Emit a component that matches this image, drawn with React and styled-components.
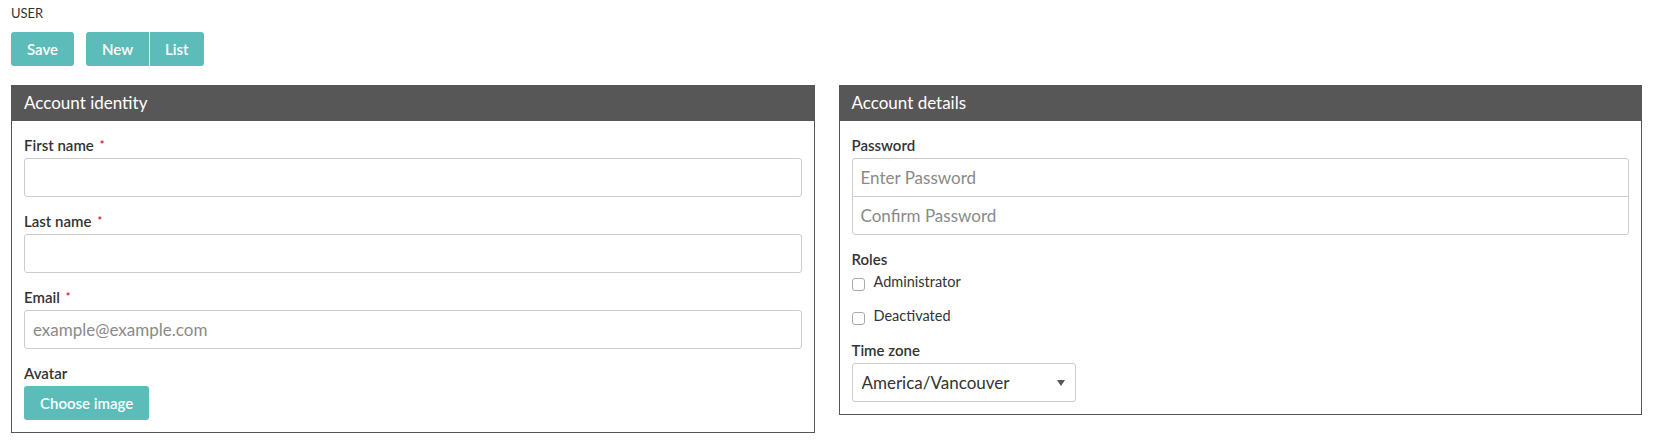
import React from "react";
import styled, { createGlobalStyle } from "styled-components";

const GlobalStyle = createGlobalStyle`
  html, body {
    margin: 0;
    padding: 0;
    background: #ffffff;
  }
  body {
    font-family: Lato, "Liberation Sans", Arial, sans-serif;
    color: #333333;
  }
  * { box-sizing: border-box; }
`;

const Page = styled.div`
  padding: 5px 15px 0 11px;
`;

const Title = styled.div`
  font-size: 13px;
  line-height: 16px;
  color: #333;
  margin-bottom: 11px;
`;

const Toolbar = styled.div`
  display: flex;
  gap: 12px;
  margin-bottom: 19px;
`;

const ButtonGroup = styled.div`
  display: flex;
  gap: 1px;
  & > button { border-radius: 0; }
  & > button:first-child { border-radius: 3px 0 0 3px; }
  & > button:last-child { border-radius: 0 3px 3px 0; padding: 0 15px; }
`;

const Button = styled.button`
  height: 34px;
  padding: 0 16px;
  border: none;
  border-radius: 3px;
  background: #5cbcb9;
  color: #ffffff;
  font-family: Lato, "Liberation Sans", Arial, sans-serif;
  font-size: 15px;
  font-weight: 600;
  line-height: 34px;
  cursor: pointer;
`;

const Columns = styled.div`
  display: grid;
  grid-template-columns: 1fr 1fr;
  gap: 24px;
  align-items: start;
`;

const Panel = styled.section`
  border: 1px solid #555555;
  background: #ffffff;
`;

const PanelHeader = styled.div`
  background: #575757;
  color: #ffffff;
  font-size: 17px;
  line-height: 33px;
  padding: 0 12px 2px;
`;

const PanelBody = styled.div`
  padding: 15px 12px 12px;
`;

const Field = styled.div`
  margin-bottom: ${(p) => (p.$last ? "0" : "15px")};
`;

const Label = styled.label`
  display: block;
  font-size: 15px;
  font-weight: 600;
  line-height: 18px;
  color: #333333;
  margin-bottom: 4px;
`;

const Required = styled.span`
  color: #d0021b;
  font-size: 11px;
  line-height: 11px;
  margin-left: 6px;
  vertical-align: top;
  position: relative;
  top: 3px;
`;

const Input = styled.input`
  display: block;
  width: 100%;
  height: 39px;
  border: 1px solid #cccccc;
  border-radius: ${(p) =>
    p.$position === "top" ? "3px 3px 0 0" : p.$position === "bottom" ? "0 0 3px 3px" : "3px"};
  margin-top: ${(p) => (p.$position === "bottom" ? "-1px" : "0")};
  padding: 0 8px;
  font-family: Lato, "Liberation Sans", Arial, sans-serif;
  font-size: 17px;
  color: #333333;
  background: #ffffff;
  outline: none;
  &::placeholder {
    color: #8a8a8a;
  }
`;

const CheckRow = styled.label`
  display: flex;
  align-items: flex-start;
  gap: 9px;
  font-size: 14.5px;
  line-height: 20px;
  color: #333333;
  margin-bottom: ${(p) => (p.$last ? "0" : "14px")};
`;

const CheckBox = styled.input`
  appearance: none;
  -webkit-appearance: none;
  width: 13px;
  height: 13px;
  margin: 6px 0 0 0;
  border: 1px solid #a9a9a9;
  border-radius: 3px;
  background: #ffffff;
  flex: none;
`;

const SelectWrap = styled.div`
  position: relative;
  width: 224px;
`;

const Select = styled.select`
  appearance: none;
  -webkit-appearance: none;
  display: block;
  width: 100%;
  height: 39px;
  border: 1px solid #cccccc;
  border-radius: 3px;
  padding: 0 28px 0 9px;
  font-family: Lato, "Liberation Sans", Arial, sans-serif;
  font-size: 17px;
  color: #333333;
  background: #ffffff;
  outline: none;
`;

const Caret = styled.svg`
  position: absolute;
  right: 11px;
  top: 17px;
  pointer-events: none;
`;

export default function App() {
  return (
    <>
      <GlobalStyle />
      <Page>
        <Title>USER</Title>
        <Toolbar>
          <Button>Save</Button>
          <ButtonGroup>
            <Button>New</Button>
            <Button>List</Button>
          </ButtonGroup>
        </Toolbar>
        <Columns>
          <Panel>
            <PanelHeader>Account identity</PanelHeader>
            <PanelBody>
              <Field>
                <Label>
                  First name<Required>*</Required>
                </Label>
                <Input type="text" />
              </Field>
              <Field>
                <Label>
                  Last name<Required>*</Required>
                </Label>
                <Input type="text" />
              </Field>
              <Field>
                <Label>
                  Email<Required>*</Required>
                </Label>
                <Input type="email" placeholder="example@example.com" />
              </Field>
              <Field $last>
                <Label>Avatar</Label>
                <Button>Choose image</Button>
              </Field>
            </PanelBody>
          </Panel>
          <Panel>
            <PanelHeader>Account details</PanelHeader>
            <PanelBody>
              <Field>
                <Label>Password</Label>
                <Input type="password" placeholder="Enter Password" $position="top" />
                <Input type="password" placeholder="Confirm Password" $position="bottom" />
              </Field>
              <Field>
                <Label>Roles</Label>
                <CheckRow>
                  <CheckBox type="checkbox" />
                  Administrator
                </CheckRow>
                <CheckRow $last>
                  <CheckBox type="checkbox" />
                  Deactivated
                </CheckRow>
              </Field>
              <Field $last>
                <Label>Time zone</Label>
                <SelectWrap>
                  <Select defaultValue="America/Vancouver">
                    <option>America/Vancouver</option>
                  </Select>
                  <Caret width="8" height="6" viewBox="0 0 8 6">
                    <path d="M0 0 L8 0 L4 6 Z" fill="#555555" />
                  </Caret>
                </SelectWrap>
              </Field>
            </PanelBody>
          </Panel>
        </Columns>
      </Page>
    </>
  );
}
